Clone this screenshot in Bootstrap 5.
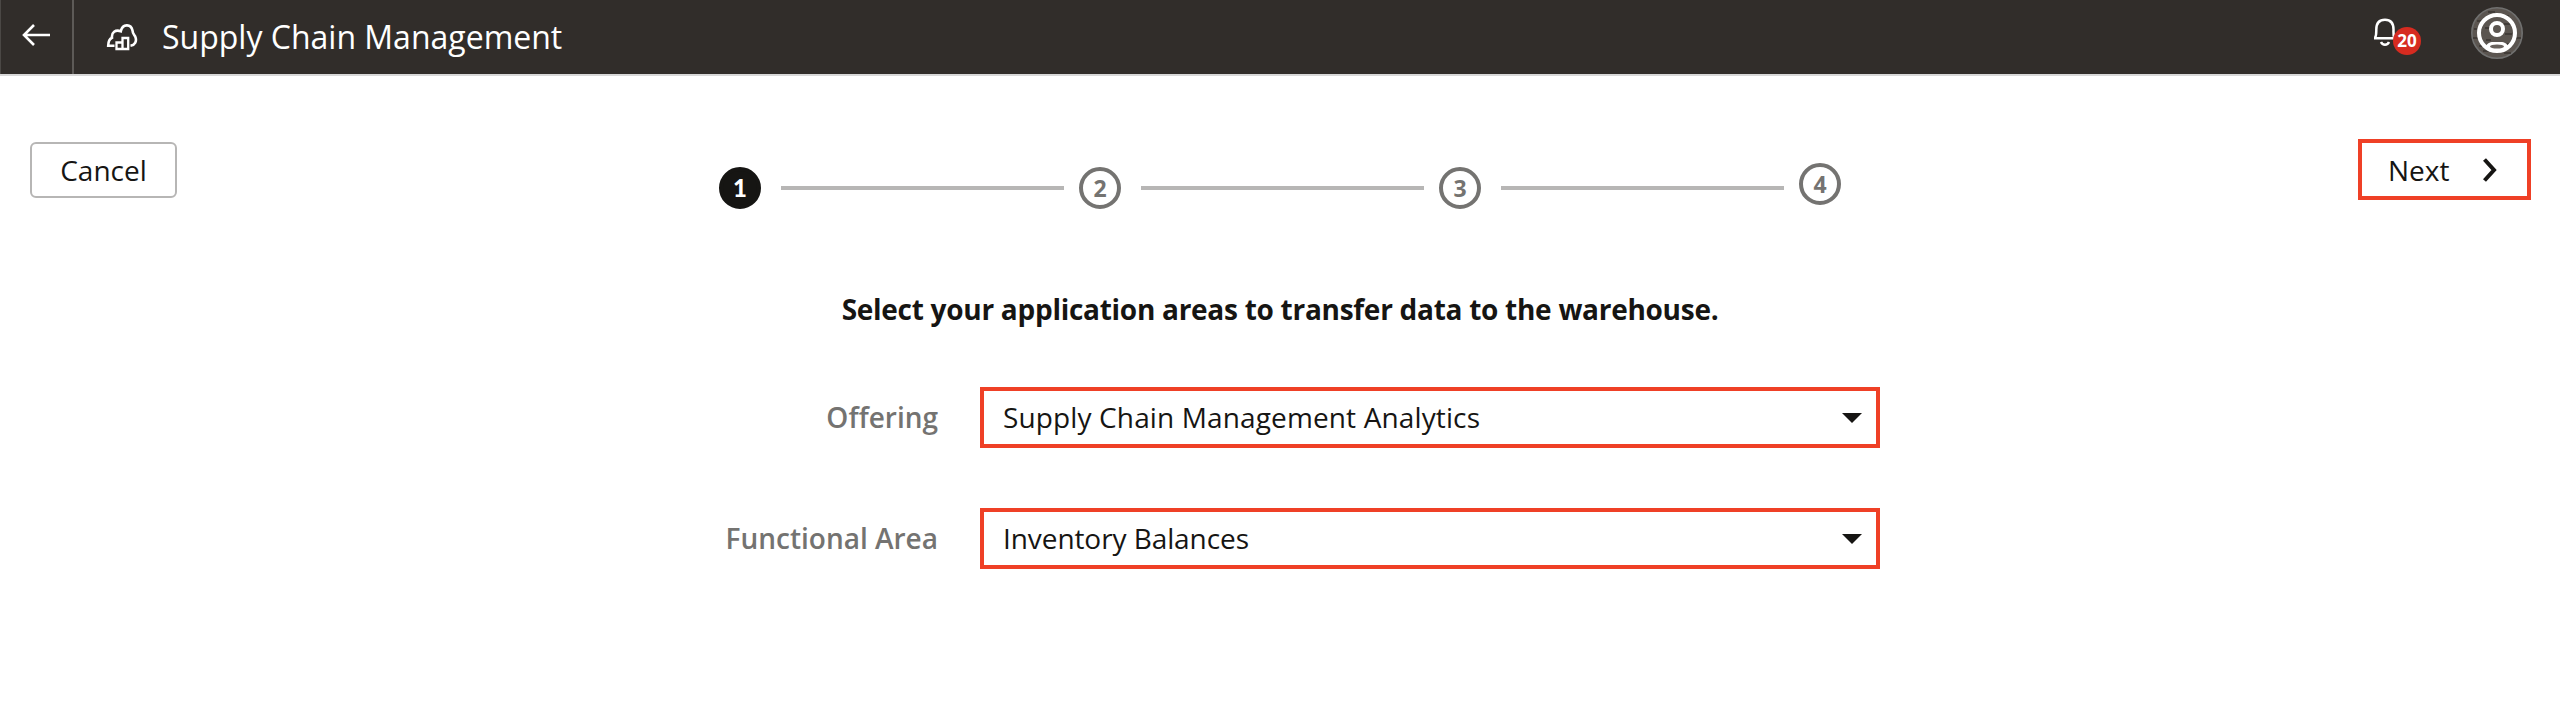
<!DOCTYPE html>
<html lang="en">
<head>
<meta charset="utf-8">
<meta name="viewport" content="width=device-width, initial-scale=1">
<title>Supply Chain Management</title>
<link href="https://cdn.jsdelivr.net/npm/bootstrap@5.3.0/dist/css/bootstrap.min.css" rel="stylesheet">
<style>
body{font-family:"Open Sans",sans-serif;font-size:28px;line-height:40px;background:#fff;color:#161513}
svg{display:block;flex:none}
.app-bar{height:76px;background:#312d2a;border-bottom:2px solid #d8d8d8;color:#fff}
.back-btn{width:74px;border-left:1px solid #4b4845;border-right:2px solid #5d5a57;padding:0 0 4px 20px;color:#fff}
.app-title{font-size:32px;line-height:44px;font-weight:400;margin:0 0 1px 24px}
.app-icon{margin:0 0 1px 32px}
.bell-wrap{margin:0 74px 10px 0}
.bell-count{left:20px;top:10px;width:28px;height:28px;background:#d62b20;font-size:17px;line-height:28px;font-weight:700}
.avatar{margin:0 37px 8px 0}
.wizard-top{display:grid;grid-template-columns:1fr 1122px 1fr;padding:63px 29px 0 29px}
.cancel-btn{width:147px;height:56px;margin:3px 0 0 1px;border:2px solid #b7b6b5;border-radius:6px;padding:6px 0;font-size:28px;line-height:40px;color:#161513}
.next-btn{width:173px;height:61px;border:4px solid #ef4026;border-radius:0;padding:0 30px 0 26px;font-size:28px;line-height:40px;color:#161513}
.steps{height:51px;margin-top:24px}
.step-dot{width:42px;height:42px;margin-top:4px;border:4px solid #747371;color:#747371;font:700 23px/34px "Open Sans",sans-serif}
.step-dot.current{background:#161513;border-color:#161513;color:#fff;font-family:Lato,sans-serif;font-weight:900;font-size:24px;line-height:34px}
.step-dot:last-child{margin-top:0}
.step-line{width:283px;height:4px;margin:23px 15px 0 20px;background:#b7b6b5}
.prompt{font-size:28px;line-height:40px;font-weight:700;letter-spacing:-.275px;margin:75px 0 58px}
.field-row{height:61px;margin-bottom:60px}
.field-label{width:938px;font-weight:600;color:#747371;padding-bottom:1px}
.field-box{width:900px;height:61px;margin-left:42px;border:4px solid #ef4026;padding:0 14px 0 19px}
.field-value{padding-bottom:1px;letter-spacing:-.08px}
.field-value.wide{letter-spacing:.13px}
</style>
</head>
<body>
<header class="app-bar d-flex">
  <a href="#" class="back-btn d-flex align-items-center" aria-label="Back">
    <svg width="30" height="24" viewBox="0 0 30 24" fill="none" stroke="#fff" stroke-width="2.6"><path d="M29 12H3M13 2L3 12l10 10"/></svg>
  </a>
  <svg class="app-icon align-self-center" width="32" height="28" viewBox="0 0 32 28" fill="none" stroke="#fff" stroke-width="2.6">
    <path d="M8.500 22.800H2.200C2.300 18.500 3.300 16 6 14.800C5.300 9.500 9.500 6.300 14.800 8.300C16.500 .500 25 .500 26.500 7.500C26.500 10 27.500 11 29.200 13.500C31.200 18 29 22 24.500 22.800"/>
    <path d="M10.500 19.500h6v6.500h-6zM16.500 15h5.700v11h-5.700z" stroke-width="2.300"/>
  </svg>
  <h1 class="app-title align-self-center">Supply Chain Management</h1>
  <div class="d-flex align-items-center ms-auto">
    <div class="bell-wrap position-relative">
      <svg width="24" height="30" viewBox="0 0 24 30" fill="none" stroke="#fff" stroke-width="2.500"><path d="M1 21.300H22M2 21C3.500 18.500 3.300 16 3.300 12.500C3.300 6 6.500 2.700 12 2.700S20.500 6 20.500 12.500C20.500 16 20 18.500 21.500 21"/><path d="M8 25C9.500 28.500 14.500 28.500 16 25"/></svg>
      <span class="bell-count position-absolute rounded-circle text-center">20</span>
    </div>
    <svg class="avatar" width="52" height="52" viewBox="0 0 52 52">
      <circle cx="26" cy="26" r="25.200" fill="#5b5550" stroke="#70706f" stroke-width="1.600"/>
      <path d="M6 14h8M28 9h10M33 17h10M3 22h8M14 21h5M34 27h7M2 31h7M42 31h8M15 33h5M8 39h5M36 37h5M12 44h6M33 46h7M17 5h7" stroke="#3a3531" stroke-width="1.500"/>
      <circle cx="26" cy="26" r="18" fill="none" stroke="#fff" stroke-width="4"/>
      <circle cx="26" cy="22" r="6" fill="none" stroke="#fff" stroke-width="4"/>
      <path d="M15 39.500C17 34.500 21 35 26 35S35 34.500 37 39.500Q26 47 15 39.500Z" fill="#fff"/>
      <ellipse cx="26" cy="39.500" rx="7" ry="2" fill="#69625d"/>
    </svg>
  </div>
</header>
<main>
  <div class="wizard-top">
    <div><button type="button" class="cancel-btn btn">Cancel</button></div>
    <div class="steps d-flex align-items-start">
      <span class="step-dot current rounded-circle text-center">1</span><span class="step-line"></span>
      <span class="step-dot rounded-circle text-center">2</span><span class="step-line"></span>
      <span class="step-dot rounded-circle text-center">3</span><span class="step-line"></span>
      <span class="step-dot rounded-circle text-center">4</span>
    </div>
    <div class="d-flex justify-content-end">
      <button type="button" class="next-btn btn d-flex align-items-center justify-content-between">Next
        <svg width="14" height="24" viewBox="0 0 14 24" fill="none" stroke="#161513" stroke-width="4"><path d="M1.500 1.500L11 12L1.500 22.500"/></svg>
      </button>
    </div>
  </div>
  <h2 class="prompt text-center">Select your application areas to transfer data to the warehouse.</h2>
  <div class="field-row d-flex align-items-center">
    <span class="field-label text-end">Offering</span>
    <div class="field-box d-flex align-items-center justify-content-between" role="combobox"><span class="field-value wide">Supply Chain Management Analytics</span>
      <svg width="20" height="10" viewBox="0 0 20 10"><path d="M0 0h20L10 10z" fill="#161513"/></svg></div>
  </div>
  <div class="field-row d-flex align-items-center">
    <span class="field-label text-end">Functional Area</span>
    <div class="field-box d-flex align-items-center justify-content-between" role="combobox"><span class="field-value">Inventory Balances</span>
      <svg width="20" height="10" viewBox="0 0 20 10"><path d="M0 0h20L10 10z" fill="#161513"/></svg></div>
  </div>
</main>
<script src="https://cdn.jsdelivr.net/npm/bootstrap@5.3.0/dist/js/bootstrap.bundle.min.js"></script>
</body>
</html>
